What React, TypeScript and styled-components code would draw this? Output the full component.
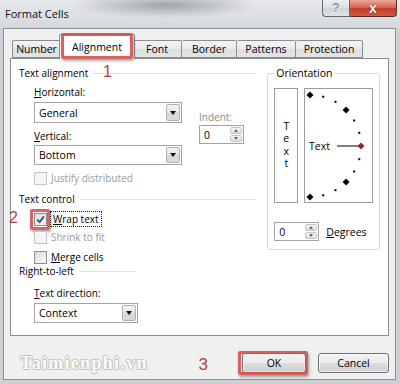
import React from "react";
import styled, { createGlobalStyle } from "styled-components";

const GlobalStyle = createGlobalStyle`
  html, body { margin: 0; padding: 0; background: #fff; }
  body {
    font-family: "Open Sans", "Noto Sans", sans-serif;
    font-size: 10px;
    color: #000;
  }
  * { box-sizing: border-box; }
`;

const Window = styled.div`
  width: 400px;
  height: 384px;
  background: #cdd1d6;
  display: flex;
  flex-direction: column;
  overflow: hidden;
`;

const TitleBar = styled.div`
  height: 28px;
  flex: none;
  display: flex;
  align-items: flex-start;
  background:
    radial-gradient(ellipse 95px 13px at 165px 5px, rgba(80, 85, 92, 0.45), rgba(80, 85, 92, 0)),
    linear-gradient(#e8eaed, #d4d8dd);
`;

const Title = styled.div`
  margin: 6px 0 0 5px;
  font-size: 11px;
  line-height: 16px;
  color: #111;
`;

const CaptionButtons = styled.div`
  margin-left: auto;
  margin-right: 3px;
  display: flex;
`;

const CaptionButton = styled.div<{ $close?: boolean }>`
  height: 17px;
  width: ${(p) => (p.$close ? "47px" : "28px")};
  display: flex;
  align-items: center;
  justify-content: center;
  border: 1px solid ${(p) => (p.$close ? "#5b3029" : "#606873")};
  border-top: none;
  border-left-width: ${(p) => (p.$close ? "0" : "1px")};
  border-radius: ${(p) => (p.$close ? "0 0 4px 0" : "0 0 0 4px")};
  background: ${(p) =>
    p.$close
      ? "linear-gradient(#e9a997, #d26a55 45%, #c33c26 55%, #d45a43)"
      : "linear-gradient(#eef0f3, #dde1e6 45%, #cfd4da 55%, #dfe3e8)"};
  color: ${(p) => (p.$close ? "#fff" : "#8a9099")};
  font-family: "Liberation Sans", sans-serif;
  font-weight: bold;
  font-size: ${(p) => (p.$close ? "14px" : "12px")};
  text-shadow: ${(p) =>
    p.$close ? "0 0 1px #5a2018, 0 0 1px #5a2018" : "0 1px 0 #fff"};
`;

const Client = styled.div`
  flex: 1;
  margin: 0 4px 4px 3px;
  background: #f0f0f0;
  border: 1px solid #8b9097;
  display: flex;
  flex-direction: column;
`;

const TabArea = styled.div`
  padding: 5px 6px 0 6px;
`;

const TabStrip = styled.div`
  height: 24px;
  display: flex;
  align-items: flex-end;
  padding-left: 2px;
`;

const Tab = styled.div<{ $w: number; $active?: boolean }>`
  position: relative;
  width: ${(p) => p.$w}px;
  height: ${(p) => (p.$active ? 25 : 18)}px;
  margin: ${(p) => (p.$active ? "0 -2px -1px -2px" : "0")};
  z-index: ${(p) => (p.$active ? 2 : 1)};
  border: 1px solid #898c95;
  border-bottom: ${(p) => (p.$active ? "none" : "1px solid #898c95")};
  border-left-width: ${(p) => (p.$active ? "1px" : "0")};
  border-radius: 2px 2px 0 0;
  background: ${(p) =>
    p.$active ? "#fff" : "linear-gradient(#f3f3f3, #ebebeb 50%, #dedede 51%, #e4e4e4)"};
  display: flex;
  align-items: ${(p) => (p.$active ? "flex-start" : "center")};
  justify-content: center;
  padding-top: ${(p) => (p.$active ? "5px" : "0")};
  font-size: 10.5px;
  line-height: 14px;
  &:first-child {
    border-left-width: 1px;
  }
`;

const RedBox = styled.div<{ $t: number; $l: number; $r: number; $b: number }>`
  position: absolute;
  top: ${(p) => p.$t}px;
  left: ${(p) => p.$l}px;
  right: ${(p) => p.$r}px;
  bottom: ${(p) => p.$b}px;
  border: 3px solid rgba(208, 72, 72, 0.85);
  border-radius: 2px;
  box-shadow: 1px 2px 3px rgba(0, 0, 0, 0.35), inset 0 0 1px rgba(120, 0, 0, 0.4);
  pointer-events: none;
`;

const Marker = styled.span<{ $t: number; $l: number }>`
  position: absolute;
  top: ${(p) => p.$t}px;
  left: ${(p) => p.$l}px;
  font-family: "Liberation Sans", sans-serif;
  font-size: 16px;
  line-height: 16px;
  color: #b8403a;
`;

const Panel = styled.div`
  height: 278px;
  background: #fff;
  border: 1px solid #898c95;
  display: flex;
  gap: 9px;
  padding: 7px 8px 0 8px;
`;

const LeftCol = styled.div`
  width: 240px;
  display: flex;
  flex-direction: column;
`;

const Heading = styled.div<{ $mt: number; $w: number }>`
  position: relative;
  width: ${(p) => p.$w}px;
  height: 14px;
  line-height: 14px;
  margin-top: ${(p) => p.$mt}px;
  display: flex;
  align-items: center;
  gap: 5px;
  white-space: nowrap;
  &::after {
    content: "";
    flex: 1;
    height: 1px;
    background: #dde2e7;
  }
`;

const FieldLabel = styled.div<{ $mt: number; $ml?: number; $dim?: boolean }>`
  height: 14px;
  line-height: 14px;
  margin-top: ${(p) => p.$mt}px;
  margin-left: ${(p) => p.$ml ?? 0}px;
  color: ${(p) => (p.$dim ? "#8a8a8a" : "#000")};
  white-space: nowrap;
`;

const AlignGrid = styled.div`
  margin: 5px 0 0 15px;
  display: grid;
  grid-template-columns: 148px auto;
  column-gap: 17px;
`;

const Stack = styled.div<{ $pt?: number }>`
  display: flex;
  flex-direction: column;
  padding-top: ${(p) => p.$pt ?? 0}px;
`;

const Combo = styled.div<{ $w: number; $h: number; $mt: number; $ml?: number }>`
  width: ${(p) => p.$w}px;
  height: ${(p) => p.$h}px;
  margin-top: ${(p) => p.$mt}px;
  margin-left: ${(p) => p.$ml ?? 0}px;
  border: 1px solid #a3a3a3;
  background: #fff;
  display: flex;
  align-items: center;
  padding: 1px 1px 1px 4px;
  font-size: 10.5px;
`;

const ComboText = styled.span`
  flex: 1;
`;

const DropButton = styled.div`
  width: 14px;
  align-self: stretch;
  border: 1px solid #b2b2b2;
  border-radius: 2px;
  background: linear-gradient(#f4f4f4, #e6e6e6 50%, #d6d6d6 51%, #dcdcdc);
  display: flex;
  align-items: center;
  justify-content: center;
  &::after {
    content: "";
    border-left: 3.5px solid transparent;
    border-right: 3.5px solid transparent;
    border-top: 4px solid #111;
  }
`;

const Spinner = styled.div<{ $mt?: number }>`
  width: 45px;
  height: 19px;
  margin-top: ${(p) => p.$mt ?? 0}px;
  border: 1px solid #a3a3a3;
  background: #fff;
  display: flex;
  align-items: center;
  padding: 1px 1px 1px 4px;
  font-size: 10.5px;
`;

const SpinArrows = styled.div`
  margin-left: auto;
  width: 12px;
  align-self: stretch;
  display: flex;
  flex-direction: column;
  gap: 1px;
`;

const SpinHalf = styled.div<{ $down?: boolean }>`
  flex: 1;
  border: 1px solid #c4c4c4;
  border-radius: 2px;
  background: linear-gradient(#f5f5f5, #dedede);
  display: flex;
  align-items: center;
  justify-content: center;
  &::after {
    content: "";
    border-left: 2.5px solid transparent;
    border-right: 2.5px solid transparent;
    ${(p) => (p.$down ? "border-top: 3px solid #6a6a6a;" : "border-bottom: 3px solid #6a6a6a;")}
  }
`;

const CheckRow = styled.div<{ $mt: number; $dim?: boolean }>`
  position: relative;
  margin: ${(p) => p.$mt}px 0 0 15px;
  height: 14px;
  display: flex;
  align-items: center;
  gap: 4px;
  color: ${(p) => (p.$dim ? "#9a9a9a" : "#000")};
  white-space: nowrap;
`;

const Box = styled.span<{ $dim?: boolean }>`
  position: relative;
  width: 13px;
  height: 13px;
  flex: none;
  border: 1px solid ${(p) => (p.$dim ? "#c6c6c6" : "#8e8f8f")};
  background: ${(p) =>
    p.$dim ? "#f4f4f4" : "linear-gradient(135deg, #dcdcdc, #f8f8f8)"};
  display: flex;
  align-items: center;
  justify-content: center;
`;

const Focus = styled.span`
  outline: 1px dotted #222;
  outline-offset: 0;
  padding: 0 2px;
  line-height: 14px;
`;

const Group = styled.fieldset`
  width: 113px;
  height: 184px;
  margin: 0;
  padding: 8px 0 0 6px;
  border: 1px solid #d5dbe1;
  border-radius: 3px;
`;

const Legend = styled.legend`
  padding: 0 2px;
  margin-left: 0;
  line-height: 14px;
  font-size: 10.5px;
`;

const OrientRow = styled.div`
  display: flex;
  gap: 6px;
`;

const VerticalText = styled.div`
  width: 24px;
  height: 115px;
  border: 1px solid #9c9c9c;
  display: flex;
  flex-direction: column;
  align-items: center;
  justify-content: center;
  line-height: 12.5px;
  font-size: 10.5px;
  padding-bottom: 2px;
`;

const DialBox = styled.div`
  width: 69px;
  height: 115px;
  border: 1px solid #9c9c9c;
`;

const DegreeRow = styled.div`
  margin-top: 19px;
  display: flex;
  align-items: center;
  gap: 7px;
  font-size: 10.5px;
`;

const Footer = styled.div`
  flex: 1;
  display: flex;
  align-items: flex-start;
  justify-content: flex-end;
  padding: 17px 6px 0 16px;
`;

const Watermark = styled.div`
  margin-right: auto;
  font-family: "Liberation Serif", serif;
  font-weight: bold;
  font-size: 18px;
  line-height: 20px;
  letter-spacing: 1.3px;
  color: #fbfbfb;
  text-shadow: -1px 0 0 #c2c2c2, 1px 0 0 #c2c2c2, 0 -1px 0 #c2c2c2, 0 1px 0 #c2c2c2,
    1px 1px 1px #d0d0d0;
`;

const StepNumber = styled.span`
  margin: 3px 22px 0 0;
  font-family: "Liberation Sans", sans-serif;
  font-size: 17px;
  line-height: 18px;
  color: #b8403a;
`;

const Button = styled.div<{ $w: number }>`
  position: relative;
  width: ${(p) => p.$w}px;
  height: 20px;
  margin-left: 12px;
  border: 1px solid #707070;
  border-radius: 3px;
  background: linear-gradient(#f2f2f2, #ebebeb 50%, #dddddd 51%, #cfcfcf);
  box-shadow: inset 0 0 0 1px rgba(255, 255, 255, 0.7);
  display: flex;
  align-items: center;
  justify-content: center;
  font-size: 10.5px;
`;

const Dial = () => {
  const cx = 5;
  const cy = 57;
  const r = 51;
  const marks = [];
  for (let a = 90; a >= -90; a -= 15) {
    const rad = (a * Math.PI) / 180;
    const x = cx + r * Math.cos(rad);
    const y = cy - r * Math.sin(rad);
    if (a === 0) continue;
    if (Math.abs(a) === 90 || Math.abs(a) === 45) {
      marks.push(
        <polygon
          key={a}
          points={`${x},${y - 3.5} ${x + 3.5},${y} ${x},${y + 3.5} ${x - 3.5},${y}`}
          fill="#000"
        />
      );
    } else {
      marks.push(<rect key={a} x={x - 1} y={y - 1} width="2" height="2" fill="#000" />);
    }
  }
  const rx = cx + r;
  return (
    <svg width="67" height="113" viewBox="0 0 67 113">
      {marks}
      <text x="4" y={cy + 4} fontSize="10.5" fontFamily="Open Sans, sans-serif" fill="#000">
        Text
      </text>
      <line x1="32" y1={cy} x2={rx - 2} y2={cy} stroke="#000" strokeWidth="1" />
      <polygon
        points={`${rx},${cy - 3.5} ${rx + 3.5},${cy} ${rx},${cy + 3.5} ${rx - 3.5},${cy}`}
        fill="#8c2b2b"
      />
    </svg>
  );
};

const Check = () => (
  <svg width="9" height="9" viewBox="0 0 9 9">
    <path d="M1.2 4.6 L3.6 7.2 L7.9 1.4" fill="none" stroke="#33508f" strokeWidth="1.8" />
  </svg>
);

const Spin = ({ value, mt }: { value: string; mt?: number }) => (
  <Spinner $mt={mt}>
    {value}
    <SpinArrows>
      <SpinHalf />
      <SpinHalf $down />
    </SpinArrows>
  </Spinner>
);

const tabs = [
  { label: "Number", w: 49 },
  { label: "Alignment", w: 76, active: true },
  { label: "Font", w: 49 },
  { label: "Border", w: 55 },
  { label: "Patterns", w: 59 },
  { label: "Protection", w: 67 },
];

export default function App() {
  return (
    <>
      <GlobalStyle />
      <Window>
        <TitleBar>
          <Title>Format Cells</Title>
          <CaptionButtons>
            <CaptionButton>?</CaptionButton>
            <CaptionButton $close>x</CaptionButton>
          </CaptionButtons>
        </TitleBar>
        <Client>
          <TabArea>
            <TabStrip>
              {tabs.map((t) => (
                <Tab key={t.label} $w={t.w} $active={t.active}>
                  {t.label}
                  {t.active && <RedBox $t={-2} $l={1} $r={1} $b={0} />}
                </Tab>
              ))}
            </TabStrip>
            <Panel>
              <LeftCol>
                <Heading $mt={0} $w={237}>
                  Text alignment
                  <Marker $t={-2} $l={84}>1</Marker>
                </Heading>
                <AlignGrid>
                  <Stack>
                    <FieldLabel $mt={0}>
                      <u>H</u>orizontal:
                    </FieldLabel>
                    <Combo $w={148} $h={21} $mt={3}>
                      <ComboText>General</ComboText>
                      <DropButton />
                    </Combo>
                    <FieldLabel $mt={6}>
                      <u>V</u>ertical:
                    </FieldLabel>
                    <Combo $w={148} $h={20} $mt={2}>
                      <ComboText>Bottom</ComboText>
                      <DropButton />
                    </Combo>
                  </Stack>
                  <Stack $pt={25}>
                    <FieldLabel $mt={0} $dim>
                      Indent:
                    </FieldLabel>
                    <Spin value="0" mt={1} />
                  </Stack>
                </AlignGrid>
                <CheckRow $mt={6} $dim>
                  <Box $dim />
                  Justify distributed
                </CheckRow>
                <Heading $mt={7} $w={237}>
                  Text control
                </Heading>
                <CheckRow $mt={6}>
                  <Marker $t={-2} $l={-25}>2</Marker>
                  <Box>
                    <Check />
                    <RedBox $t={-5} $l={-5} $r={-4} $b={-5} />
                  </Box>
                  <Focus>
                    <u>W</u>rap text
                  </Focus>
                </CheckRow>
                <CheckRow $mt={4} $dim>
                  <Box $dim />
                  Shrink to fit
                </CheckRow>
                <CheckRow $mt={6}>
                  <Box />
                  <span>
                    <u>M</u>erge cells
                  </span>
                </CheckRow>
                <Heading $mt={0} $w={117}>
                  Right-to-left
                </Heading>
                <FieldLabel $mt={8} $ml={15}>
                  <u>T</u>ext direction:
                </FieldLabel>
                <Combo $w={104} $h={20} $mt={3} $ml={15}>
                  <ComboText>Context</ComboText>
                  <DropButton />
                </Combo>
              </LeftCol>
              <Group>
                <Legend>Orientation</Legend>
                <OrientRow>
                  <VerticalText>
                    <span>T</span>
                    <span>e</span>
                    <span>x</span>
                    <span>t</span>
                  </VerticalText>
                  <DialBox>
                    <Dial />
                  </DialBox>
                </OrientRow>
                <DegreeRow>
                  <Spin value="0" />
                  <span>
                    <u>D</u>egrees
                  </span>
                </DegreeRow>
              </Group>
            </Panel>
          </TabArea>
          <Footer>
            <Watermark>Taimienphi.vn</Watermark>
            <StepNumber>3</StepNumber>
            <Button $w={64}>
              OK
              <RedBox $t={-3} $l={-5} $r={-3} $b={-3} />
            </Button>
            <Button $w={71}>Cancel</Button>
          </Footer>
        </Client>
      </Window>
    </>
  );
}
